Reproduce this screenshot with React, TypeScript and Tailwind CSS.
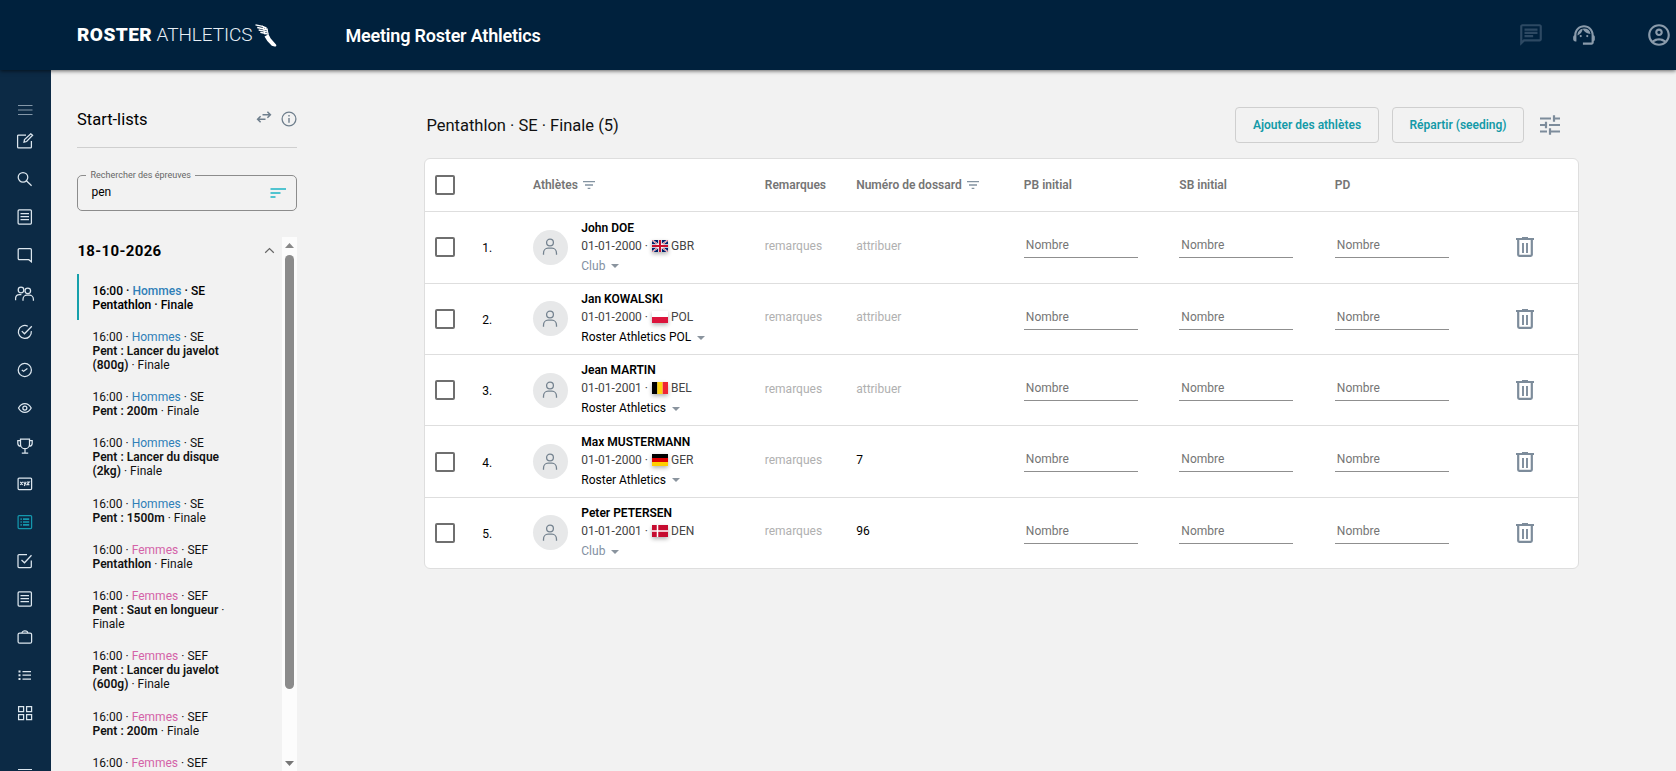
import React from "react";
import {
  MdFilterList,
  MdOutlineChat,
  MdOutlineAccountCircle,
  MdSupportAgent,
} from "react-icons/md";

type IconProps = { children: React.ReactNode; className?: string };

function Icon({ children, className = "" }: IconProps) {
  return (
    <svg
      width="20"
      height="16"
      viewBox="0 0 20 16"
      fill="none"
      stroke="currentColor"
      strokeWidth="1.25"
      className={className}
    >
      {children}
    </svg>
  );
}

const article = (
  <>
    <rect x="3.1" y="0.9" width="13.3" height="14.2" rx="1" />
    <path d="M5.5 4.5h8.5M5.5 7.5h8.5M5.5 10.5h8.5" />
  </>
);

const railIcons: { active?: boolean; art: React.ReactNode }[] = [
  {
    art: (
      <>
        <path d="M11 2H3.6a1 1 0 0 0-1 1v10.9a1 1 0 0 0 1 1h11.8a1 1 0 0 0 1-1V8" />
        <path d="M9 9.2l.5-2.6L15.8.8l1.8 1.5-6 6.2z" />
      </>
    ),
  },
  {
    art: (
      <>
        <circle cx="8" cy="6.3" r="4.8" />
        <path d="M11.4 9.8l5.2 5" />
      </>
    ),
  },
  { art: article },
  {
    art: (
      <path d="M4.3 1.7h11a1.1 1.1 0 0 1 1.1 1.1v12l-2.6-2.1H4.3a1.1 1.1 0 0 1-1.1-1.1V2.8a1.1 1.1 0 0 1 1.1-1.1z" />
    ),
  },
  {
    art: (
      <>
        <circle cx="6" cy="4" r="2.8" />
        <circle cx="12.8" cy="4.8" r="2.8" />
        <path d="M.6 14.2v-2a3.8 3.8 0 0 1 3.8-3.6h2M8 14.8v-1.6a4 4 0 0 1 4-4h2.4a4 4 0 0 1 4 4v1.6" />
      </>
    ),
  },
  {
    art: (
      <>
        <path d="M12.8 2.2A6.5 6.5 0 1 0 16.3 7.2" />
        <path d="M6.8 7.1l2.7 2.7 7.3-7.6" />
      </>
    ),
  },
  {
    art: (
      <>
        <circle cx="9.8" cy="8" r="6.6" />
        <path d="M6.8 8l1.8 1.2 3.8-2.6" />
      </>
    ),
  },
  {
    art: (
      <>
        <path d="M3.5 8c3-5.8 9.7-5.8 12.7 0-3 5.8-9.7 5.8-12.7 0z" />
        <circle cx="9.85" cy="8" r="2" />
      </>
    ),
  },
  {
    art: (
      <path d="M5.5 1.2h9v5a4.5 4.5 0 0 1-9 0zM5.5 2.7H2.8v2.5c0 2 1.3 3 3 3M14.5 2.7h2.7v2.5c0 2-1.3 3-3 3M10 10.7v4M6.8 15.2h6.4" />
    ),
  },
  {
    art: (
      <>
        <rect x="3.1" y="2" width="13.5" height="11.6" rx="1" />
        <path
          d="M5.3 5.8l2.4 3M7.7 5.8l-2.4 3M8.7 5.8l1.3 2.7M11.2 5.8l-1.9 4.2M12 6h2.2l-2.2 2.7h2.4"
          strokeWidth="1.2"
        />
      </>
    ),
  },
  {
    active: true,
    art: (
      <>
        <rect x="3.1" y="1.5" width="13.5" height="13" rx="1" />
        <path d="M5.5 5.2h1.3M5.5 8h1.3M5.5 10.8h1.3M8 5.2h6.2M8 8h6.2M8 10.8h6.2" strokeWidth="1.7" />
      </>
    ),
  },
  {
    art: (
      <>
        <path d="M12 1.6H4a1 1 0 0 0-1 1v10.9a1 1 0 0 0 1 1h11.3a1 1 0 0 0 1-1V7.5" />
        <path d="M6.5 7l3 2.8 7-7.5" />
      </>
    ),
  },
  { art: article },
  {
    art: (
      <>
        <rect x="3.1" y="4" width="13.5" height="10.2" rx="1.5" />
        <path d="M7 4c0-2.8 5.7-2.8 5.7 0" />
      </>
    ),
  },
  {
    art: (
      <>
        <path d="M7.5 4.5h8.5M7.5 8.2h8.5M7.5 12h8.5" />
        <path d="M3.5 4.5h2M3.5 8.2h2M3.5 12h2" strokeWidth="2" />
      </>
    ),
  },
  {
    art: (
      <path d="M3.6 1.6h5v5h-5zM11.6 1.6h5v5h-5zM3.6 9.6h5v5h-5zM11.6 9.6h5v5h-5z" />
    ),
  },
];

function Header() {
  return (
    <header className="relative z-10 flex h-[70px] shrink-0 items-center bg-[#00213d] pl-[77px] shadow-[0_1px_4px_rgba(0,0,0,0.6)]">
      <div className="flex w-[268.5px] items-center text-white">
        <span className="w-[79.5px] pb-px text-[19px] leading-none font-black tracking-[0.45px]">
          ROSTER
        </span>
        <span className="w-[98.5px] pb-px text-[19px] leading-none font-light tracking-[-0.05px] text-[#e6eef5]">
          ATHLETICS
        </span>
        <svg width="22" height="23" viewBox="0 0 22 23" fill="currentColor">
          <path d="M9.500 12.500l4-2.300 2.200 4.300 5.300 6c.8 1.300.2 2.200-1.400 2.100l-2.800-.9-4.500-4.700z" />
          <path
            d="M.5.900l6 1.300 5 1.600M2.200 3.500l4.800 1 5.500 1.500M3.700 6l4.300.8 4.900 1.400M5.300 8.400l3.500.6 4.400 1.200"
            fill="none"
            stroke="currentColor"
            strokeWidth="1.3"
          />
          <path d="M7.500 1.800l4 3.500" stroke="currentColor" strokeWidth="1" />
          <path
            d="M11.800 4l1.500 6.500M8.300 3l1.600 7.500"
            fill="none"
            stroke="currentColor"
            strokeWidth="1"
          />
        </svg>
      </div>
      <h1 className="pt-[2px] text-[18px] leading-none font-semibold tracking-[-0.2px] text-white">
        Meeting Roster Athletics
      </h1>
      <div className="ml-auto flex items-center pr-[4px] text-[#8a9bab]">
        <MdOutlineChat className="mr-[27px] size-[26px] text-[#2d4963]" />
        <MdSupportAgent className="mr-[49px] size-[26px]" />
        <MdOutlineAccountCircle className="size-[26px]" />
      </div>
    </header>
  );
}

function Rail() {
  return (
    <nav className="flex w-[51px] shrink-0 flex-col items-center overflow-hidden bg-[#0c2a45] pt-[32px] pr-[2px] text-[#dce6ee]">
      <Icon className="mb-[15px] shrink-0 text-[#8497a8]">
        <path d="M3 3.500h14.500M3 8h14.500M3 12.500h14.500" strokeWidth="1" />
      </Icon>
      <div className="flex flex-col gap-[22.15px]">
        {railIcons.map((item, i) => (
          <Icon key={i} className={item.active ? "shrink-0 text-[#1497ad]" : "shrink-0"}>
            {item.art}
          </Icon>
        ))}
        <Icon className="mt-[18px] shrink-0">
          <path d="M3 8.500h14" strokeWidth="1" />
        </Icon>
      </div>
    </nav>
  );
}

type Ev = { sex: "Hommes" | "Femmes"; cat: string; name: string; selected?: boolean };

const events: Ev[] = [
  { sex: "Hommes", cat: "SE", name: "Pentathlon", selected: true },
  { sex: "Hommes", cat: "SE", name: "Pent : Lancer du javelot (800g)" },
  { sex: "Hommes", cat: "SE", name: "Pent : 200m" },
  { sex: "Hommes", cat: "SE", name: "Pent : Lancer du disque (2kg)" },
  { sex: "Hommes", cat: "SE", name: "Pent : 1500m" },
  { sex: "Femmes", cat: "SEF", name: "Pentathlon" },
  { sex: "Femmes", cat: "SEF", name: "Pent : Saut en longueur" },
  { sex: "Femmes", cat: "SEF", name: "Pent : Lancer du javelot (600g)" },
  { sex: "Femmes", cat: "SEF", name: "Pent : 200m" },
];

function EventTitle({ ev }: { ev: Ev }) {
  return (
    <div>
      16:00 ·{" "}
      <span className={ev.sex === "Hommes" ? "text-[#2f7fb8]" : "text-[#d463a8]"}>{ev.sex}</span> ·{" "}
      {ev.cat}
    </div>
  );
}

function EventItem({ ev }: { ev: Ev }) {
  return (
    <li
      className={
        "border-l-2 pt-[9.9px] pr-[48px] pb-[8.36px] pl-[13.5px] text-[12px] leading-[14px] tracking-[0.02px] " +
        (ev.selected ? "border-[#16a0ab] font-medium text-black" : "border-transparent text-[#111]")
      }
    >
      <EventTitle ev={ev} />
      <div>
        <span className="font-semibold">{ev.name}</span> · Finale
      </div>
    </li>
  );
}

function StartLists() {
  return (
    <aside className="flex w-[246px] shrink-0 flex-col pl-[26px]">
      <div className="flex h-[78px] w-[220px] shrink-0 items-center border-b border-[#cfcfcf] pt-[20px] text-[#6f7f8d]">
        <h2 className="pt-[3px] text-[16.5px] leading-none text-black">Start-lists</h2>
        <svg
          width="16"
          height="14"
          viewBox="0 0 16 14"
          fill="none"
          stroke="currentColor"
          strokeWidth="1.5"
          className="mt-[-3px] ml-auto"
        >
          <path d="M6.500 4.800h7.700M11.400 1.800l3 3-3 3M9.500 9.200H1.800M4.600 6.200l-3 3 3 3" />
        </svg>
        <svg
          width="16"
          height="16"
          viewBox="0 0 16 16"
          fill="none"
          stroke="currentColor"
          strokeWidth="1.3"
          className="mr-[0.5px] ml-[8.5px]"
        >
          <circle cx="8" cy="8" r="6.9" />
          <path d="M8 7v4.700M8 4v1.600" strokeWidth="1.4" />
        </svg>
      </div>
      <fieldset className="mt-[21px] flex h-[42px] w-[220px] shrink-0 items-center rounded-[5px] border border-[#8c8c8c] px-[8px] pr-[10px]">
        <legend className="h-[12px] px-[4.5px] text-[9px] leading-[12px] text-[#666]">
          Rechercher des épreuves
        </legend>
        <div className="mt-[1px] flex h-[20px] w-full items-center justify-between pl-[5.4px]">
          <span className="text-[12px] leading-none text-black">pen</span>
          <svg
            width="16"
            height="10"
            viewBox="0 0 16 10"
            fill="none"
            stroke="#1cb5c5"
            strokeWidth="1.5"
            className="mt-[2px]"
          >
            <path d="M.5 1H16M.5 5h10M.5 9h5" />
          </svg>
        </div>
      </fieldset>
      <div className="mt-[26px] flex min-h-0 flex-1">
        <div className="w-[205px] overflow-hidden">
          <div className="flex h-[36.8px] items-center justify-between pr-[7px] pb-[7px]">
            <h3 className="pl-[0.4px] text-[15px] leading-none font-bold tracking-[0.35px] text-black">18-10-2026</h3>
            <svg width="11" height="7" viewBox="0 0 11 7" fill="none" stroke="#666" strokeWidth="1.2" className="mt-[-2px]">
              <path d="M1.200 5.700l4.300-4.200 4.300 4.200" />
            </svg>
          </div>
          <ul>
            {events.map((ev, i) => (
              <EventItem key={i} ev={ev} />
            ))}
            <li className="pt-[9.9px] pl-[15.5px] text-[12px] leading-[14px] text-[#111]">
              <EventTitle ev={{ sex: "Femmes", cat: "SEF", name: "" }} />
            </li>
          </ul>
        </div>
        <div className="flex w-[15px] flex-col items-center bg-[#fcfcfc] pt-[6px] pb-[5px]">
          <svg width="9" height="5" viewBox="0 0 9 5" fill="#888">
            <path d="M0 5L4.500 0 9 5z" />
          </svg>
          <div className="mt-[7px] h-[434px] w-[9px] rounded-full bg-[#8b8b8b]" />
          <svg width="9" height="5" viewBox="0 0 9 5" fill="#777" className="mt-auto">
            <path d="M0 0l4.500 5L9 0z" />
          </svg>
        </div>
      </div>
    </aside>
  );
}

function Flag({ code }: { code: string }) {
  return (
    <svg width="16" height="12" viewBox="0 0 16 12" className="mr-[3px] shadow-[0_2px_4px_rgba(0,0,0,0.3)]">
      {code === "GBR" && (
        <>
          <path fill="#012169" d="M0 0h16v12H0z" />
          <path d="M0 0l16 12M16 0L0 12" stroke="#fff" strokeWidth="1.7" />
          <path d="M0 0l16 12M16 0L0 12" stroke="#c8102e" strokeWidth=".6" />
          <path d="M8 0v12M0 6h16" stroke="#fff" strokeWidth="3.6" />
          <path d="M8 0v12M0 6h16" stroke="#c8102e" strokeWidth="2" />
        </>
      )}
      {code === "POL" && (
        <>
          <path fill="#fff" d="M0 0h16v6H0z" />
          <path fill="#dc143c" d="M0 6h16v6H0z" />
        </>
      )}
      {code === "BEL" && (
        <>
          <path fill="#000" d="M0 0h5.400v12H0z" />
          <path fill="#fdd20e" d="M5.300 0h5.400v12H5.300z" />
          <path fill="#ef2433" d="M10.700 0H16v12h-5.300z" />
        </>
      )}
      {code === "GER" && (
        <>
          <path fill="#000" d="M0 0h16v4H0z" />
          <path fill="#dd0000" d="M0 4h16v4H0z" />
          <path fill="#ffce00" d="M0 8h16v4H0z" />
        </>
      )}
      {code === "DEN" && (
        <>
          <path fill="#c60c30" d="M0 0h16v12H0z" />
          <path d="M5.500 0v12M0 6h16" stroke="#fff" strokeWidth="1.5" />
        </>
      )}
    </svg>
  );
}

const athletes = [
  { name: "John DOE", dob: "01-01-2000", nat: "GBR", club: "", bib: "" },
  { name: "Jan KOWALSKI", dob: "01-01-2000", nat: "POL", club: "Roster Athletics POL", bib: "" },
  { name: "Jean MARTIN", dob: "01-01-2001", nat: "BEL", club: "Roster Athletics", bib: "" },
  { name: "Max MUSTERMANN", dob: "01-01-2000", nat: "GER", club: "Roster Athletics", bib: "7" },
  { name: "Peter PETERSEN", dob: "01-01-2001", nat: "DEN", club: "", bib: "96" },
];

function Checkbox() {
  return <span className="block size-[20px] rounded-[2px] border-2 border-[#6f6f6f] bg-white" />;
}

function Tune() {
  return (
    <svg
      width="20"
      height="20"
      viewBox="0 0 20 20"
      fill="none"
      stroke="#7d8c9b"
      strokeWidth="2.2"
      className="mr-[19px] ml-[2px]"
    >
      <path d="M0 3.500h11M14 3.500h6M14 .3v6.400M0 10h6M6 6.800v6.400M9 10h11M0 16.500h7M10 13.300v6.400M10 16.500h10" />
    </svg>
  );
}

function Trash() {
  return (
    <svg width="18" height="20" viewBox="0 0 18 20" fill="none" stroke="#7d8c9b" strokeWidth="2.2">
      <path d="M0 2h18M6 1h6" strokeWidth="2" />
      <path d="M2.200 2.500v15.300a1 1 0 0 0 1 1h11.600a1 1 0 0 0 1-1V2.500" />
      <path d="M7 6v10M11 6v10" strokeWidth="1.9" />
    </svg>
  );
}

const rowGrid =
  "grid grid-cols-[47px_50.8px_48.3px_183.5px_91.4px_167.7px_155.5px_155.5px_181.3px_1fr] items-center pl-[9.8px]";

function Entries() {
  return (
    <main className="flex-1 pl-[127.4px]">
      <div className="flex h-[88px] w-[1154.6px] items-center pt-[22px]">
        <h2 className="pt-[2px] pl-[2px] text-[16.5px] leading-none text-[#111]">
          Pentathlon · SE · Finale (5)
        </h2>
        <button className="mr-[13px] ml-auto h-[36px] w-[144px] rounded-[4px] border border-[#cfcfcf] text-[12px] font-semibold text-[#149aa8]">
          Ajouter des athlètes
        </button>
        <button className="mr-[14px] h-[36px] w-[132px] rounded-[4px] border border-[#cfcfcf] text-[12px] font-semibold text-[#149aa8]">
          Répartir (seeding)
        </button>
        <Tune />
      </div>
      <section className="h-[411px] w-[1154.6px] overflow-hidden rounded-[6px] border border-[#dedede] bg-white">
        <div className={rowGrid + " h-[52.2px] text-[12px] font-semibold text-[#757575]"}>
          <Checkbox />
          <span />
          <span className="col-span-2 flex items-center gap-[3px]">
            Athlètes <MdFilterList className="size-[16px] text-[#8393a1]" />
          </span>
          <span>Remarques</span>
          <span className="flex items-center gap-[3px]">
            Numéro de dossard <MdFilterList className="size-[16px] text-[#8393a1]" />
          </span>
          <span>PB initial</span>
          <span>SB initial</span>
          <span>PD</span>
        </div>
        {athletes.map((a, i) => (
          <div key={a.name} className={rowGrid + " h-[71.4px] border-t border-[#dedede] text-[12px] leading-none"}>
            <Checkbox />
            <span className="pt-[2px] text-black">{i + 1}.</span>
            <span className="flex size-[35px] items-center justify-center rounded-full bg-[#e7e8e9]">
              <svg width="16" height="18" viewBox="0 0 16 18" fill="none" stroke="#74828f" strokeWidth="1.3">
                <circle cx="8" cy="4.5" r="3.4" />
                <path d="M1.500 16.800v-1.500c0-3 2-5.100 4.500-5.100h4c2.500 0 4.500 2.100 4.500 5.100v1.500" />
              </svg>
            </span>
            <div className="flex flex-col">
              <span className="h-[16.5px] leading-[15px] font-semibold text-black">{a.name}</span>
              <span className="flex h-[19px] items-center pb-[2px] text-[#444]">
                <span className="mr-[4px]">{a.dob} ·</span>
                <Flag code={a.nat} />
                {a.nat}
              </span>
              <span className={"flex h-[18px] items-center gap-[6px] pt-px " + (a.club ? "text-black" : "text-[#8391a3]")}>
                {a.club || "Club"}
                <svg width="8" height="4" viewBox="0 0 8 4" fill="#8a949e" className="mt-px">
                  <path d="M0 0h8L4 4z" />
                </svg>
              </span>
            </div>
            <span className="pb-[3px] text-[#b0b0b0]">remarques</span>
            <span className={a.bib ? "pb-[3px] text-black" : "pb-[3px] text-[#b0b0b0]"}>{a.bib || "attribuer"}</span>
            {[0, 1, 2].map((n) => (
              <span
                key={n}
                className="mt-[-4.4px] flex h-[26px] w-[114px] items-center border-b border-[#8f8f8f] pt-px pl-[2px] text-[#757575]"
              >
                Nombre
              </span>
            ))}
            <Trash />
          </div>
        ))}
      </section>
    </main>
  );
}

export default function App() {
  return (
    <div className="flex h-[771px] w-full flex-col overflow-hidden bg-[#f2f2f2] font-[Roboto,sans-serif]">
      <Header />
      <div className="flex min-h-0 flex-1">
        <Rail />
        <StartLists />
        <Entries />
      </div>
    </div>
  );
}
